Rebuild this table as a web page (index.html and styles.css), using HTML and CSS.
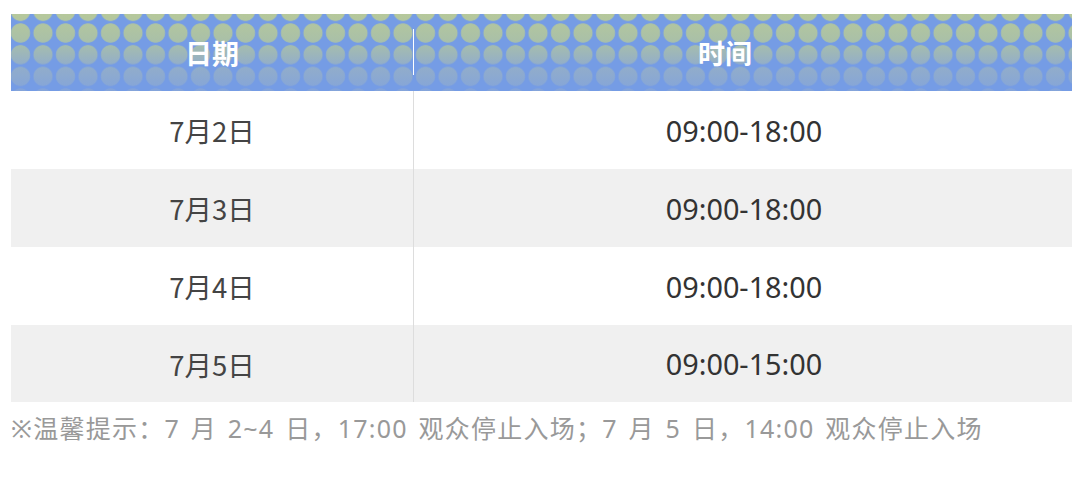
FILE: index.html
```html
<!DOCTYPE html>
<html lang="zh-CN">
<head>
<meta charset="utf-8">
<link rel="stylesheet" href="styles.css">
</head>
<body>
<div class="wrap">
  <div class="schedule">
    <div class="head">
      <div class="head-cell first">日期</div>
      <div class="head-sep"></div>
      <div class="head-cell second">时间</div>
    </div>
    <div class="row">
      <div class="cell date">7月2日</div>
      <div class="cell time">09:00-18:00</div>
    </div>
    <div class="row alt">
      <div class="cell date">7月3日</div>
      <div class="cell time">09:00-18:00</div>
    </div>
    <div class="row">
      <div class="cell date">7月4日</div>
      <div class="cell time">09:00-18:00</div>
    </div>
    <div class="row alt last">
      <div class="cell date">7月5日</div>
      <div class="cell time">09:00-15:00</div>
    </div>
  </div>
  <p class="note">※温馨提示：7 月 2~4 日，17:00 观众停止入场；7 月 5 日，14:00 观众停止入场</p>
</div>
</body>
</html>
```

FILE: styles.css
```css
html, body {
  margin: 0;
  padding: 0;
  background: #ffffff;
}
body {
  font-family: "Noto Sans", "Noto Sans CJK SC", sans-serif;
}
.wrap {
  padding: 14px 0 0 11px;
  width: 1061px;
}
.head {
  position: relative;
  height: 77px;
  display: grid;
  grid-template-columns: 402px 1px 1fr;
  align-items: center;
  background: #759ce5;
  overflow: hidden;
}
.head::before {
  content: "";
  position: absolute;
  inset: 0;
  background: linear-gradient(to bottom, #b6c89b 0%, #a9c0a8 35%, #93aec8 65%, #84a4da 100%);
  -webkit-mask-image: radial-gradient(circle at center, #000 9.2px, transparent 10px);
  mask-image: radial-gradient(circle at center, #000 9.2px, transparent 10px);
  -webkit-mask-size: 22.5px 21.7px;
  mask-size: 22.5px 21.7px;
  -webkit-mask-position: -1.75px 8.2px;
  mask-position: -1.75px 8.2px;
}
.head-cell {
  position: relative;
  text-align: center;
  color: #ffffff;
  font-family: "Noto Sans CJK SC", sans-serif;
  font-weight: 700;
  font-size: 27px;
  line-height: 32px;
}
.head-cell.second {
  padding-right: 36px;
}
.head-sep {
  position: relative;
  height: 46px;
  margin-top: -2px;
  background: #ffffff;
}
.row {
  display: grid;
  grid-template-columns: 402px 1fr;
  height: 78px;
  background: #ffffff;
}
.row.alt {
  background: #f0f0f0;
}
.row.last {
  height: 77px;
}
.cell {
  display: flex;
  align-items: center;
  justify-content: center;
  color: #333333;
}
.cell.date {
  font-family: "Noto Sans CJK SC", sans-serif;
  font-size: 27.5px;
  color: #444444;
}
.cell.time {
  border-left: 1px solid #dddddd;
  font-family: "Noto Sans", "Noto Sans CJK SC", sans-serif;
  font-size: 28.8px;
  padding-left: 2px;
}
.note {
  margin: 8px 0 0 0;
  color: #999999;
  font-family: "Noto Sans", "Noto Sans CJK SC", sans-serif;
  font-size: 25px;
  line-height: 36px;
  letter-spacing: 1.25px;
  word-spacing: 3px;
  white-space: nowrap;
}
```
